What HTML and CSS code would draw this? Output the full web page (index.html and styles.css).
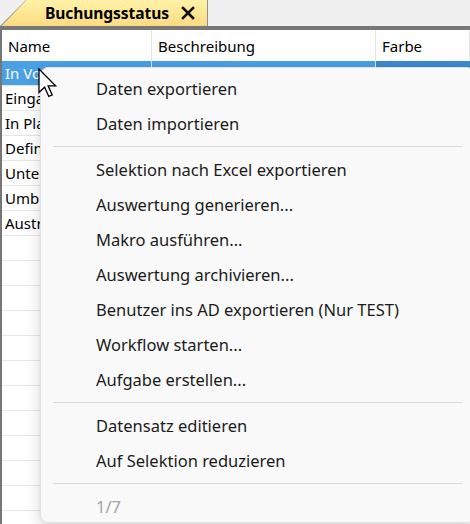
FILE: index.html
```html
<!DOCTYPE html>
<html lang="de">
<head>
<meta charset="utf-8">
<title>Buchungsstatus</title>
<link rel="stylesheet" href="styles.css">
</head>
<body>
<div class="window">
  <div class="tabstrip">
    <div class="tab">
      <div class="tab-face">
        <span class="tab-title">Buchungsstatus</span>
        <svg class="tab-close" width="14" height="14" viewBox="0 0 14 14" aria-hidden="true">
          <path d="M2 2 L12 12 M12 2 L2 12" stroke="#111" stroke-width="2.6" stroke-linecap="square"/>
        </svg>
      </div>
    </div>
  </div>

  <div class="grid">
    <div class="grid-head">
      <div class="cell">Name</div>
      <div class="cell">Beschreibung</div>
      <div class="cell">Farbe</div>
    </div>
    <div class="grid-row selected">
      <div class="cell">In Vorbereitung</div>
      <div class="cell"></div>
      <div class="cell focus"></div>
    </div>
    <div class="grid-row"><div class="cell">Eingabe</div><div class="cell"></div><div class="cell"></div></div>
    <div class="grid-row"><div class="cell">In Planung</div><div class="cell"></div><div class="cell"></div></div>
    <div class="grid-row"><div class="cell">Definiert</div><div class="cell"></div><div class="cell"></div></div>
    <div class="grid-row"><div class="cell">Unterbrochen</div><div class="cell"></div><div class="cell"></div></div>
    <div class="grid-row"><div class="cell">Umbuchung</div><div class="cell"></div><div class="cell"></div></div>
    <div class="grid-row"><div class="cell">Austritt</div><div class="cell"></div><div class="cell"></div></div>
    <div class="grid-row"><div class="cell"></div><div class="cell"></div><div class="cell"></div></div>
    <div class="grid-row"><div class="cell"></div><div class="cell"></div><div class="cell"></div></div>
    <div class="grid-row"><div class="cell"></div><div class="cell"></div><div class="cell"></div></div>
    <div class="grid-row"><div class="cell"></div><div class="cell"></div><div class="cell"></div></div>
    <div class="grid-row"><div class="cell"></div><div class="cell"></div><div class="cell"></div></div>
    <div class="grid-row"><div class="cell"></div><div class="cell"></div><div class="cell"></div></div>
    <div class="grid-row"><div class="cell"></div><div class="cell"></div><div class="cell"></div></div>
    <div class="grid-row"><div class="cell"></div><div class="cell"></div><div class="cell"></div></div>
    <div class="grid-row"><div class="cell"></div><div class="cell"></div><div class="cell"></div></div>
    <div class="grid-row"><div class="cell"></div><div class="cell"></div><div class="cell"></div></div>
    <div class="grid-row"><div class="cell"></div><div class="cell"></div><div class="cell"></div></div>
    <div class="grid-row"><div class="cell"></div><div class="cell"></div><div class="cell"></div></div>
  </div>

  <div class="context-menu">
    <div class="menu-item">Daten exportieren</div>
    <div class="menu-item">Daten importieren</div>
    <div class="menu-sep"></div>
    <div class="menu-item">Selektion nach Excel exportieren</div>
    <div class="menu-item">Auswertung generieren...</div>
    <div class="menu-item">Makro ausführen...</div>
    <div class="menu-item">Auswertung archivieren...</div>
    <div class="menu-item">Benutzer ins AD exportieren (Nur TEST)</div>
    <div class="menu-item">Workflow starten...</div>
    <div class="menu-item">Aufgabe erstellen...</div>
    <div class="menu-sep"></div>
    <div class="menu-item">Datensatz editieren</div>
    <div class="menu-item">Auf Selektion reduzieren</div>
    <div class="menu-sep"></div>
    <div class="menu-item disabled">1/7</div>
  </div>

  <svg class="pointer" width="20" height="30" viewBox="0 0 20 30" aria-hidden="true">
    <path d="M1 1 L1 24.5 L6.6 19.2 L10.8 28.4 L14.2 26.9 L10.1 17.8 L17.6 17.8 Z"
          fill="#fff" stroke="#000" stroke-width="1.3" stroke-linejoin="miter"/>
  </svg>
</div>
</body>
</html>
```

FILE: styles.css
```css
* {
  box-sizing: border-box;
}

html, body {
  margin: 0;
  padding: 0;
  background: #f0f0f0;
}

body {
  font-family: "Noto Sans", "Open Sans", sans-serif;
  font-size: 15px;
  color: #000;
  overflow: hidden;
}

.window {
  position: relative;
  width: 470px;
  height: 524px;
  overflow: hidden;
}

/* ---------- document tab strip ---------- */
.tabstrip {
  height: 30px;
  display: flex;
  align-items: flex-start;
  background: #f0f0f0;
  border-bottom: 4px solid;
  border-image: linear-gradient(#f3cf6c 0 25%, #d8c79c 25% 50%, #777 50% 100%) 1;
}

.tab {
  width: 208px;
  height: 26px;
  background: #8f8f8f;
  clip-path: polygon(0 100%, 26px 0, 100% 0, 100% 100%);
}

.tab-face {
  height: 100%;
  display: flex;
  align-items: center;
  padding-left: 45px;
  gap: 12px;
  background: linear-gradient(#fff2a8, #fde690 55%, #fcd982);
  clip-path: polygon(1.5px 100%, 26.5px 0, calc(100% - 1px) 0, calc(100% - 1px) 100%);
}

.tab-title {
  font-weight: 700;
  font-size: 15.6px;
  letter-spacing: -0.1px;
  line-height: 1;
  padding-top: 1px;
}

.tab-close {
  display: block;
}

/* ---------- data grid ---------- */
.grid {
  background: #fff;
  border-left: 2px solid #767676;
  height: 494px;
}

.grid-head,
.grid-row {
  display: grid;
  grid-template-columns: 150px 224px 1fr;
}

.grid-head {
  height: 31px;
}

.grid-head .cell {
  padding: 6px 0 0 6px;
  border-right: 1px solid #e4e4e4;
  line-height: 20px;
  white-space: nowrap;
  overflow: hidden;
}

.grid-row {
  height: 25px;
  border-bottom: 1px solid #e6e6e6;
}

.grid-row .cell {
  padding: 1px 0 0 3px;
  line-height: 22px;
  white-space: nowrap;
  overflow: hidden;
}

.grid-row.selected {
  background: #4aa0e4;
  color: #fff;
  border-bottom-color: #e6e6e6;
}

.grid-row.selected .cell {
  border-right: 1px solid #cfe4f7;
}

.grid-row.selected .cell.focus {
  background: #3b89cc;
  border-right: none;
}

/* ---------- context menu ---------- */
.context-menu {
  position: absolute;
  left: 40px;
  top: 67px;
  width: 435px;
  height: 456px;
  padding: 4px 0;
  background: #f9f9f9;
  border: 1px solid #e2e2e2;
  border-radius: 8px;
  box-shadow: 0 6px 16px rgba(0, 0, 0, 0.14), 0 0 4px rgba(0, 0, 0, 0.05);
  overflow: hidden;
}

.menu-item {
  height: 35px;
  line-height: 34px;
  padding-left: 55px;
  font-size: 16.5px;
  color: #1b1b1b;
  white-space: nowrap;
}

.menu-item.disabled {
  color: #a3a3a3;
}

.menu-sep {
  height: 11px;
  margin: 0 12px;
  display: flex;
  align-items: flex-start;
  padding-top: 4px;
}

.menu-sep::before {
  content: "";
  flex: 1;
  height: 1px;
  background: #dadada;
}

/* ---------- mouse pointer ---------- */
.pointer {
  position: absolute;
  left: 38px;
  top: 68px;
}
```
